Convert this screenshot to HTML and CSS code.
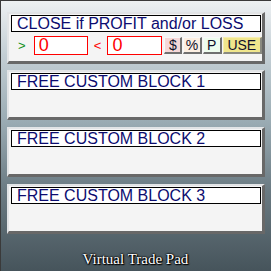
FILE: index.html
```html
<!DOCTYPE html>
<html lang="en">
<head>
    <meta charset="UTF-8">
    <meta name="viewport" content="width=device-width, initial-scale=1.0">
    <title>Virtual Trade Pad</title>
    <link rel="stylesheet" href="styles.css">
</head>
<body>
    <div class="pad">
        <div class="panel panel-close">
            <div class="caption">CLOSE if PROFIT and/or LOSS</div>
            <div class="row">
                <span class="sign gt">&gt;</span>
                <input class="amount" type="text" value="0">
                <span class="sign lt">&lt;</span>
                <input class="amount amount-loss" type="text" value="0">
                <button class="btn btn-dollar">$</button>
                <button class="btn btn-percent">%</button>
                <button class="btn btn-points">P</button>
                <button class="btn btn-use">USE</button>
            </div>
        </div>

        <div class="panel">
            <div class="caption">FREE CUSTOM BLOCK 1</div>
        </div>
        <div class="panel">
            <div class="caption">FREE CUSTOM BLOCK 2</div>
        </div>
        <div class="panel">
            <div class="caption">FREE CUSTOM BLOCK 3</div>
        </div>

        <div class="footer">Virtual Trade Pad</div>
    </div>
</body>
</html>
```

FILE: styles.css
```css
html, body {
    margin: 0;
    padding: 0;
}
body {
    width: 271px;
    height: 271px;
    box-sizing: border-box;
    border-top: 1px solid #3a3a3a;
    border-left: 1px solid #3a3a3a;
    overflow: hidden;
    background: linear-gradient(to bottom, #eef1f3 0%, #c4cfd5 20%, #9aabb3 45%, #6b7b83 70%, #46545b 100%);
    font-family: "Liberation Sans", Arial, sans-serif;
}
.pad {
    display: flex;
    flex-direction: column;
    gap: 7px;
    padding: 11px 0 0 6px;
}
.panel {
    width: 258px;
    height: 50px;
    box-sizing: border-box;
    padding: 1px 0 0 2px;
    background-color: #f4f4f4;
    border-top: 2px solid #e2e4e6;
    border-left: 2px solid #e2e4e6;
    border-right: 3px solid #686868;
    border-bottom: 3px solid #686868;
}
.panel-close {
    height: 52px;
    margin-bottom: -1px;
}
.caption {
    width: 250px;
    height: 17px;
    box-sizing: border-box;
    border: 1px solid #000;
    background-color: #fff;
    color: #0c0c70;
    font-size: 16px;
    line-height: 15px;
    padding-left: 5px;
    white-space: nowrap;
}
.row {
    display: flex;
    align-items: center;
    height: 19px;
    margin-top: 4px;
}
.sign {
    font-size: 13px;
    box-sizing: border-box;
}
.gt {
    color: #10901a;
    width: 23px;
    padding-left: 7px;
}
.lt {
    color: #ff0000;
    width: 20px;
    padding-left: 6px;
}
.amount {
    width: 54px;
    height: 19px;
    box-sizing: border-box;
    margin: 0;
    padding: 0 0 0 4px;
    border: 1px solid #ff0000;
    background-color: #fff;
    color: #ff0000;
    font-family: "Liberation Sans", Arial, sans-serif;
    font-size: 18px;
    line-height: 17px;
    outline: none;
}
.amount-loss {
    width: 55px;
    margin-right: 2px;
}
.btn {
    width: 18px;
    height: 17px;
    box-sizing: border-box;
    margin: 0 1px 0 0;
    padding: 0;
    border-top: 1px solid #f8f8f8;
    border-left: 1px solid #f8f8f8;
    border-right: 2px solid #707070;
    border-bottom: 2px solid #707070;
    color: #10102a;
    font-family: "Liberation Sans", Arial, sans-serif;
    font-size: 14px;
    line-height: 13px;
    cursor: pointer;
}
.btn-dollar {
    background-color: #f6d8d8;
}
.btn-percent {
    width: 19px;
    background-color: #fcefe2;
}
.btn-points {
    width: 19px;
    background-color: #eefcee;
}
.btn-use {
    width: 40px;
    margin-right: 0;
    background-color: #f0e68c;
    border-top-color: #f6eeb0;
    border-left-color: #f6eeb0;
    border-right-color: #8a8a80;
    border-bottom-color: #8a8a80;
}
.footer {
    margin-top: 8px;
    text-align: center;
    color: #fff;
    font-family: "Liberation Serif", "Times New Roman", serif;
    font-size: 15px;
    line-height: 20px;
    text-shadow: 0 0 2px #000, 0 0 2px #000, 0 0 1px #000, 1px 1px 1px #000;
    padding-right: 7px;
}
```
